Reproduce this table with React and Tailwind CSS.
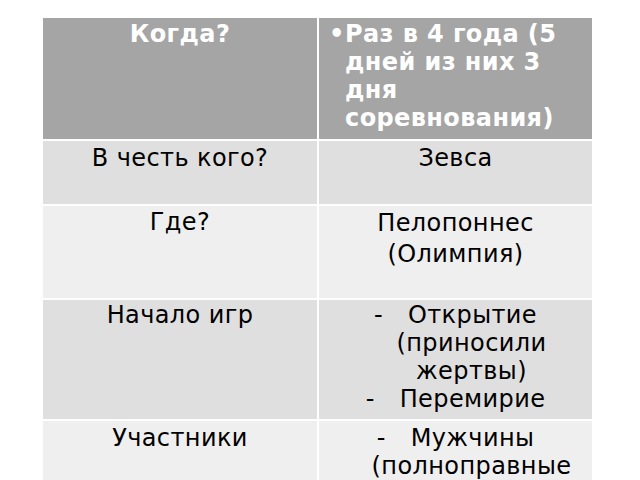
import React from 'react';

const font = { fontFamily: '"DejaVu Sans", "Noto Sans", sans-serif' };

function DashItem({ first, rest }) {
    return (
        <div>
            <div className="text-center">
                <span className="inline-block w-[34px] text-left">-</span>
                {first}
            </div>
            {rest.map((line) => (
                <div key={line} className="pl-[32px] text-center">{line}</div>
            ))}
        </div>
    );
}

export default function App() {
    return (
        <div className="w-[640px] h-[480px] overflow-hidden bg-white pl-[43px] pt-[18px]" style={font}>
            <div className="grid grid-cols-[274px_273px] grid-rows-[121px_63px_92px_119px_80px] gap-[2px] text-[24px] leading-[28px] tracking-[0.4px] text-black">
                {/* header */}
                <div className="bg-[#a5a5a5] pt-[2px] text-center font-bold text-white">Когда?</div>
                <div className="bg-[#a5a5a5] pt-[2px] pl-[10px] font-bold text-white flex">
                    <span className="w-[16px] shrink-0">•</span>
                    <div>
                        <div>Раз в 4 года (5</div>
                        <div>дней из них 3</div>
                        <div>дня</div>
                        <div>соревнования)</div>
                    </div>
                </div>

                <div className="bg-[#dfdfdf] pt-[3px] text-center">В честь кого?</div>
                <div className="bg-[#dfdfdf] pt-[3px] text-center">Зевса</div>

                <div className="bg-[#efefef] pt-[2px] text-center">Где?</div>
                <div className="bg-[#efefef] pt-[2px] text-center leading-[31px]">
                    <div>Пелопоннес</div>
                    <div>(Олимпия)</div>
                </div>

                <div className="bg-[#dfdfdf] pt-[1px] text-center">Начало игр</div>
                <div className="bg-[#dfdfdf] pt-[1px]">
                    <DashItem first="Открытие" rest={['(приносили', 'жертвы)']} />
                    <DashItem first="Перемирие" rest={[]} />
                </div>

                <div className="bg-[#efefef] pt-[3px] text-center">Участники</div>
                <div className="bg-[#efefef] pt-[3px]">
                    <DashItem first="Мужчины" rest={['(полноправные']} />
                </div>
            </div>
        </div>
    );
}
